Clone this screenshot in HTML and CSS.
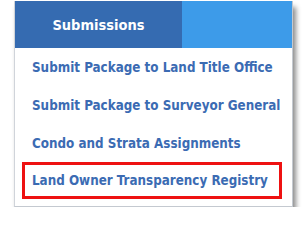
FILE: index.html
```html
<!DOCTYPE html>
<html>
<head>
<meta charset="utf-8">
<link rel="stylesheet" href="styles.css">
</head>
<body>
<div class="panel">
  <div class="header">
    <div class="tab">Submissions</div>
    <div class="rest"></div>
  </div>
  <ul class="menu">
    <li class="item">Submit Package to Land Title Office</li>
    <li class="item">Submit Package to Surveyor General</li>
    <li class="item">Condo and Strata Assignments</li>
    <li class="item selected">Land Owner Transparency Registry</li>
  </ul>
</div>
</body>
</html>
```
FILE: styles.css
```css
html, body {
  margin: 0;
  padding: 0;
  background: #ffffff;
}
body {
  padding: 1px 0 0 14px;
  font-family: "DejaVu Sans Condensed", "DejaVu Sans", sans-serif;
  font-weight: bold;
}
.panel {
  width: 277px;
  border-left: 1px solid #d0d4da;
  border-right: 1px solid #c4c9d0;
  border-bottom: 1px solid #c4c9d0;
  background: #ffffff;
  box-shadow: 3px 6px 5px rgba(0, 0, 0, 0.45);
}
.header {
  display: flex;
  height: 47px;
}
.tab {
  width: 167px;
  padding-top: 1px;
  background: #356bb1;
  color: #ffffff;
  font-size: 14.5px;
  display: flex;
  align-items: center;
  justify-content: center;
}
.rest {
  flex: 1;
  background: #3d9be9;
}
.menu {
  list-style: none;
  margin: 0;
  padding: 0 0 7px 0;
}
.item {
  height: 38px;
  display: flex;
  align-items: center;
  padding-left: 17px;
  color: #3b6bb3;
  font-size: 13.3px;
}
.selected {
  margin: 0 10px 0 7px;
  padding-left: 7px;
  height: 31px;
  border: 3px solid #ee1111;
}
```
